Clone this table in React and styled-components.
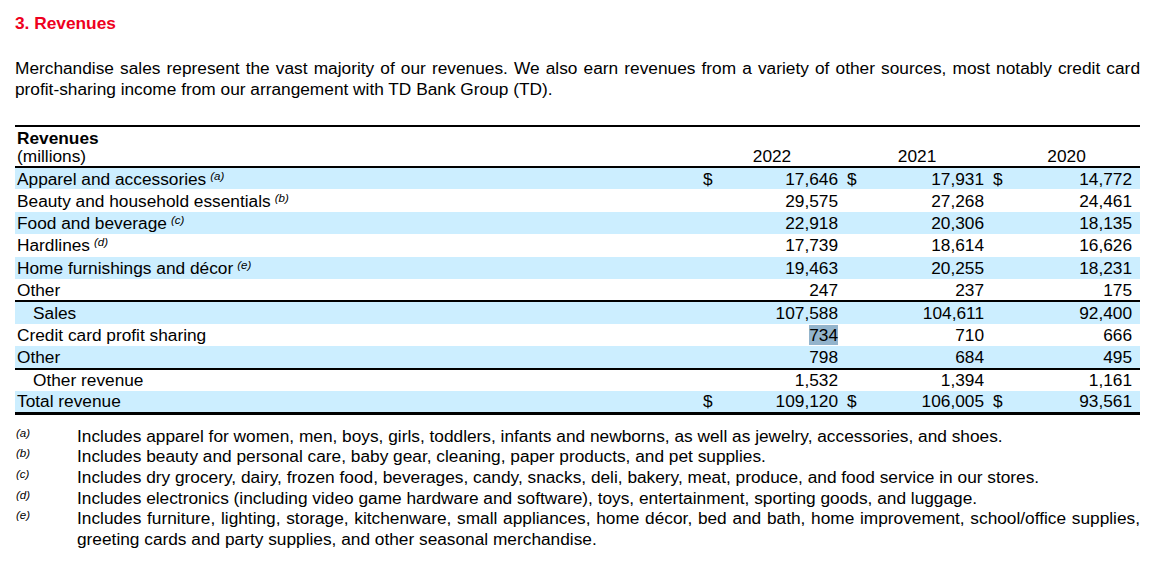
import React from "react"
import styled, { createGlobalStyle } from "styled-components"

const GlobalStyle = createGlobalStyle`
  body {
    margin: 0;
    background: #fff;
    color: #000;
    font-family: "Liberation Sans", Arial, sans-serif;
  }
`

const Page = styled.div`
  width: 1125px;
  padding: 14px 0 0 15px;
  font-size: 17.3px;
`

const Title = styled.h3`
  color: #ee0020;
  font-size: 17.3px;
  font-weight: bold;
  line-height: 19px;
  margin: 0 0 25px 0;
`

const Intro = styled.p`
  line-height: 21px;
  margin: 0 0 25px 0;
  text-align: justify;
`

const Table = styled.table`
  border-collapse: collapse;
  border-top: 2px solid #000;
  border-bottom: 3px solid #000;
  table-layout: fixed;
  width: 1125px;
`

const HeadRow = styled.tr`
  border-bottom: 2px solid #000;
`

const HeadLabel = styled.th`
  font-weight: normal;
  line-height: 18px;
  padding: 2px 0 1px 2px;
  text-align: left;
  vertical-align: bottom;

  strong {
    display: block;
    font-weight: bold;
  }
`

const Year = styled.th`
  font-weight: normal;
  line-height: 18px;
  padding: 0 0 1px 6px;
  text-align: center;
  vertical-align: bottom;
`

const Row = styled.tr`
  background: ${props => (props.$shade ? "#cceeff" : "#fff")};
  border-top: ${props => (props.$rule ? "2px solid #000" : "none")};
  height: 22.4px;
`

const Label = styled.td`
  line-height: 18px;
  padding: 0 0 0 ${props => (props.$indent ? "18px" : "2px")};
  white-space: nowrap;
`

const Note = styled.sup`
  font-size: 11.5px;
  font-style: italic;
  margin-left: 4px;
  vertical-align: 5px;
  line-height: 0;
`

const Dollar = styled.td`
  line-height: 18px;
  padding: 0 0 0 6px;
`

const Value = styled.td`
  line-height: 18px;
  padding: 0 ${props => (props.$last ? "8px" : "3px")} 0 0;
  text-align: right;
`

const Selected = styled.span`
  background: #93b4cc;
`

const Notes = styled.div`
  display: grid;
  grid-template-columns: 62px 1fr;
  line-height: 20.6px;
  margin-top: 11px;
`

const Marker = styled.span`
  font-size: 11.5px;
  font-style: italic;
  line-height: 14px;
  padding-left: 1px;
`

const NoteText = styled.span`
  text-align: justify;
`

const rows = [
  { label: "Apparel and accessories", note: "a", values: ["17,646", "17,931", "14,772"], dollar: true },
  { label: "Beauty and household essentials", note: "b", values: ["29,575", "27,268", "24,461"] },
  { label: "Food and beverage", note: "c", values: ["22,918", "20,306", "18,135"] },
  { label: "Hardlines", note: "d", values: ["17,739", "18,614", "16,626"] },
  { label: "Home furnishings and décor", note: "e", values: ["19,463", "20,255", "18,231"] },
  { label: "Other", values: ["247", "237", "175"] },
  { label: "Sales", indent: true, rule: true, values: ["107,588", "104,611", "92,400"] },
  { label: "Credit card profit sharing", values: ["734", "710", "666"], selected: true },
  { label: "Other", values: ["798", "684", "495"] },
  { label: "Other revenue", indent: true, rule: true, values: ["1,532", "1,394", "1,161"] },
  { label: "Total revenue", values: ["109,120", "106,005", "93,561"], dollar: true },
]

const footnotes = [
  ["a", "Includes apparel for women, men, boys, girls, toddlers, infants and newborns, as well as jewelry, accessories, and shoes."],
  ["b", "Includes beauty and personal care, baby gear, cleaning, paper products, and pet supplies."],
  ["c", "Includes dry grocery, dairy, frozen food, beverages, candy, snacks, deli, bakery, meat, produce, and food service in our stores."],
  ["d", "Includes electronics (including video game hardware and software), toys, entertainment, sporting goods, and luggage."],
  ["e", "Includes furniture, lighting, storage, kitchenware, small appliances, home décor, bed and bath, home improvement, school/office supplies, greeting cards and party supplies, and other seasonal merchandise."],
]

const App = () => (
  <Page>
    <GlobalStyle />
    <Title>3. Revenues</Title>
    <Intro>
      Merchandise sales represent the vast majority of our revenues. We also earn revenues from a variety of other
      sources, most notably credit card profit-sharing income from our arrangement with TD Bank Group (TD).
    </Intro>
    <Table>
      <colgroup>
        <col style={{ width: 682 }} />
        <col style={{ width: 20 }} />
        <col style={{ width: 124 }} />
        <col style={{ width: 20 }} />
        <col style={{ width: 126 }} />
        <col style={{ width: 20 }} />
        <col style={{ width: 133 }} />
      </colgroup>
      <thead>
        <HeadRow>
          <HeadLabel>
            <strong>Revenues</strong>
            (millions)
          </HeadLabel>
          <Year colSpan={2}>2022</Year>
          <Year colSpan={2}>2021</Year>
          <Year colSpan={2}>2020</Year>
        </HeadRow>
      </thead>
      <tbody>
        {rows.map((row, i) => (
          <Row key={i} $shade={i % 2 === 0} $rule={row.rule}>
            <Label $indent={row.indent}>
              {row.label}
              {row.note && <Note>({row.note})</Note>}
            </Label>
            {row.values.map((v, j) => (
              <React.Fragment key={j}>
                <Dollar>{row.dollar ? "$" : ""}</Dollar>
                <Value $last={j === 2}>{row.selected && j === 0 ? <Selected>{v}</Selected> : v}</Value>
              </React.Fragment>
            ))}
          </Row>
        ))}
      </tbody>
    </Table>
    <Notes>
      {footnotes.map(([key, text]) => (
        <React.Fragment key={key}>
          <Marker>({key})</Marker>
          <NoteText>{text}</NoteText>
        </React.Fragment>
      ))}
    </Notes>
  </Page>
)

export default App
